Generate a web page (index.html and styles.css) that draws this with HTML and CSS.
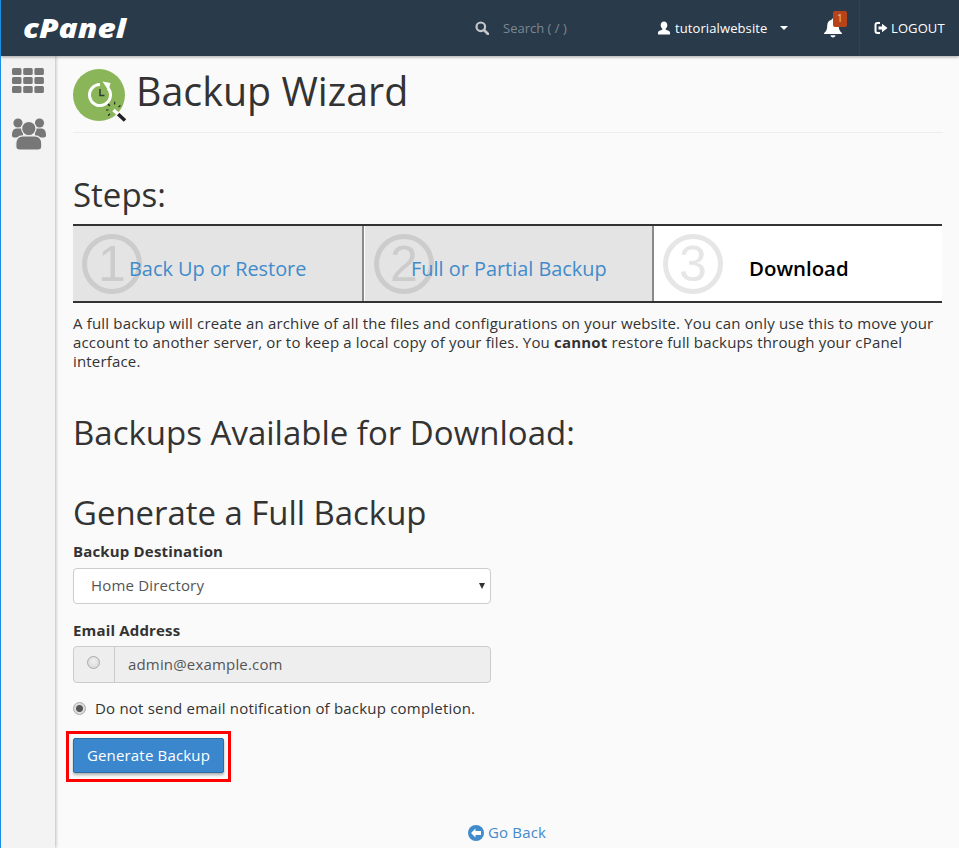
FILE: index.html
```html
<!DOCTYPE html>
<html lang="en">

<head>
  <meta charset="UTF-8">
  <meta name="viewport" content="width=device-width, initial-scale=1.0">
  <title>Backup Wizard</title>
  <link rel="stylesheet" href="styles.css">
</head>

<body>
  <header class="topbar">
    <div class="logo-box"><a class="logo" href="#">cPanel</a></div>
    <div class="search">
      <svg class="search-icon" viewBox="0 0 14 14" width="14" height="14">
        <circle cx="5.800" cy="5.800" r="4.300" fill="none" stroke="#c4c8cc" stroke-width="2.200" />
        <path d="M9 9l4 4" stroke="#c4c8cc" stroke-width="2.600" stroke-linecap="round" />
      </svg>
      <span class="search-text">Search ( / )</span>
    </div>
    <div class="user">
      <svg viewBox="0 0 14 14" width="14" height="14">
        <path d="M7 0.500c2 0 3.300 1.500 3.300 3.600 0 1.600-.7 3-1.600 3.700v1c2 .6 4.300 1.200 4.300 2.700v1.900H1v-1.900c0-1.500 2.300-2.100 4.300-2.700v-1c-.9-.7-1.600-2.100-1.600-3.700C3.700 2 5 .5 7 .5z" fill="#fff" />
      </svg>
      <span>tutorialwebsite</span>
      <i class="caret"></i>
    </div>
    <div class="bell">
      <svg viewBox="0 0 18 18" width="20" height="20">
        <path d="M9 .5c.7 0 1.200.5 1.200 1.100 2.600.5 4 2.700 4 5.400 0 3.500 1 5 2.800 6.500v1H1v-1c1.800-1.500 2.800-3 2.800-6.500 0-2.700 1.400-4.900 4-5.400C7.800 1 8.300.5 9 .5zM6.800 15.500h4.400c0 1.200-1 2-2.200 2s-2.200-.8-2.200-2z" fill="#fff" />
      </svg>
      <span class="badge">1</span>
    </div>
    <div class="logout">
      <svg viewBox="0 0 14 14" width="14" height="14">
        <path d="M6 2H3.500C2.300 2 1.500 2.800 1.500 4v6c0 1.200.8 2 2 2H6" fill="none" stroke="#fff" stroke-width="2" />
        <path d="M4.500 5.500H8V2.800L13.500 7 8 11.200V8.500H4.500z" fill="#fff" />
      </svg>
      <span>LOGOUT</span>
    </div>
  </header>

  <div class="wrap">
    <nav class="sidebar">
      <svg class="side-grid" viewBox="0 0 32 25" width="32" height="25">
        <g fill="#777">
          <rect x="0" y="0" width="9.500" height="7" rx="1.500" />
          <rect x="11.200" y="0" width="9.500" height="7" rx="1.500" />
          <rect x="22.400" y="0" width="9.500" height="7" rx="1.500" />
          <rect x="0" y="9" width="9.500" height="7" rx="1.500" />
          <rect x="11.200" y="9" width="9.500" height="7" rx="1.500" />
          <rect x="22.400" y="9" width="9.500" height="7" rx="1.500" />
          <rect x="0" y="18" width="9.500" height="7" rx="1.500" />
          <rect x="11.200" y="18" width="9.500" height="7" rx="1.500" />
          <rect x="22.400" y="18" width="9.500" height="7" rx="1.500" />
        </g>
      </svg>
      <svg class="side-users" viewBox="0 0 34 32" width="34" height="32">
        <g fill="#777">
          <circle cx="6" cy="5" r="4.600" />
          <circle cx="27.500" cy="5" r="4.600" />
          <path d="M0 17c0-4.500 2-6.500 5-6.500h6v9H2c-1.200 0-2-.8-2-2zM34 17c0-4.500-2-6.500-5-6.500h-6v9h9c1.200 0 2-.8 2-2z" />
          <g stroke="#f3f3f3" stroke-width="1.200">
            <circle cx="16.800" cy="10.500" r="7.200" />
            <path d="M3.800 26c0-5 2.500-8.200 7-8.200h12c4.500 0 7 3.200 7 8.200v2.500c0 2-1.500 3.500-3.500 3.500h-19c-2 0-3.500-1.500-3.500-3.500z" />
          </g>
        </g>
      </svg>
    </nav>

    <main class="content">
      <div class="page-head">
        <svg class="page-icon" viewBox="0 0 54 54" width="54" height="54">
          <circle cx="26" cy="26" r="26" fill="#8ab659" />
          <path d="M27 15.500a10.500 10.500 0 1 0 8 3.700" fill="none" stroke="#fff" stroke-width="3" />
          <path d="M29.500 12.500l8 1.500-2 7.500z" fill="#fff" />
          <path d="M27 20v6.500h4.500" fill="none" stroke="#2d3b3b" stroke-width="1.500" />
          <path d="M45 45l7 6.500" stroke="#222" stroke-width="3.500" />
          <path d="M40.500 41l4.500 4" stroke="#fff" stroke-width="3.500" />
          <path d="M35.500 41h-2.500M37 37l-2-2M41.500 35.500l.3-2.800M45.500 38l2-1.500M37 45l-2 1.500" stroke="#222" stroke-width="1.200" />
        </svg>
        <h1>Backup Wizard</h1>
      </div>

      <h2 class="steps-title">Steps:</h2>
      <div class="steps">
        <div class="step done">
          <span class="num">1</span>
          <a href="#">Back Up or Restore</a>
        </div>
        <div class="step done">
          <span class="num">2</span>
          <a href="#">Full or Partial Backup</a>
        </div>
        <div class="step current">
          <span class="num">3</span>
          <b>Download</b>
        </div>
      </div>

      <p class="desc">A full backup will create an archive of all the files and configurations on your website. You can only use this to move your account to another server, or to keep a local copy of your files. You <b>cannot</b> restore full backups through your cPanel interface.</p>

      <h2 class="avail">Backups Available for Download:</h2>
      <h2 class="generate">Generate a Full Backup</h2>

      <form class="backup-form">
        <label class="field-label">Backup Destination</label>
        <div class="dest-wrap">
          <select class="dest">
            <option>Home Directory</option>
          </select>
        </div>

        <label class="field-label email-label">Email Address</label>
        <div class="email-group">
          <span class="addon"><input class="radio" type="radio" name="notify"></span>
          <input class="email" type="text" value="admin@example.com" disabled>
        </div>

        <label class="no-mail"><input class="radio" type="radio" name="notify" checked> Do not send email notification of backup completion.</label>

        <div class="btn-mark">
          <button class="btn" type="button">Generate Backup</button>
        </div>
      </form>

      <div class="go-back">
        <a href="#">
          <svg viewBox="0 0 16 16" width="16" height="16">
            <circle cx="8" cy="8" r="8" fill="#428bca" />
            <path d="M3 8l4.500-4.500V6H13v4H7.500v2.500z" fill="#fff" />
          </svg>
          Go Back</a>
      </div>
    </main>
  </div>
</body>

</html>
```

FILE: styles.css
```css
* {
  box-sizing: border-box;
}

body {
  margin: 0;
  padding: 0;
  height: 848px;
  overflow: hidden;
  background: #fafafa;
  border-left: 1px solid #1a8fe6;
  font-family: "Open Sans", sans-serif;
  font-size: 15px;
  letter-spacing: 0.17px;
  color: #333;
}

a {
  color: #428bca;
  text-decoration: none;
}

/* top bar */
.topbar {
  display: flex;
  align-items: center;
  height: 56px;
  background: #293a4a;
  color: #fff;
  box-shadow: 0 1px 3px rgba(0, 0, 0, 0.35);
  position: relative;
  z-index: 2;
}

.logo-box {
  width: 474px;
  padding: 0 0 2px 22px;
}

.logo {
  display: inline-block;
  font-size: 27px;
  font-weight: 800;
  font-style: italic;
  letter-spacing: 0;
  color: #fff;
  transform: scaleX(1.17);
  transform-origin: left center;
}

.search {
  display: flex;
  align-items: center;
  width: 183px;
  font-size: 13px;
  letter-spacing: 0;
}

.search-text {
  margin-left: 14px;
  color: #7d8791;
}

.user {
  display: flex;
  align-items: center;
  width: 165px;
  font-size: 13px;
  letter-spacing: 0.1px;
}

.user svg {
  margin-left: -1px;
}

.user span {
  margin-left: 4px;
}

.caret {
  margin-left: 13px;
  border-top: 4px solid #fff;
  border-left: 4.5px solid transparent;
  border-right: 4.5px solid transparent;
}

.bell {
  position: relative;
  width: 36px;
  height: 56px;
  padding-top: 18px;
}

.badge {
  position: absolute;
  left: 10px;
  top: 11px;
  width: 14px;
  height: 16px;
  border-radius: 2px;
  background: #b7431a;
  color: #e8c9b8;
  font-size: 10px;
  line-height: 15px;
  text-align: center;
}

.logout {
  display: flex;
  align-items: center;
  height: 56px;
  padding-left: 14px;
  border-left: 1px solid #314253;
  font-size: 13px;
  letter-spacing: 0.1px;
}

.logout span {
  margin-left: 3px;
}

/* layout */
.wrap {
  display: flex;
  height: 792px;
}

.sidebar {
  display: flex;
  flex-direction: column;
  align-items: center;
  width: 54px;
  padding-top: 12px;
  background: #f3f3f3;
  box-shadow: 1px 0 3px rgba(0, 0, 0, 0.25);
}

.side-users {
  margin-top: 25px;
  margin-left: 1px;
}

.content {
  width: 870px;
  margin-left: 18px;
}

/* title */
.page-head {
  display: flex;
  height: 77px;
  padding-top: 13px;
  border-bottom: 1px solid #eee;
}

.page-icon {
  flex: none;
}

.page-head h1 {
  margin: -7px 0 0 9px;
  font-size: 39.4px;
  font-weight: 400;
  letter-spacing: 0;
  line-height: 58px;
}

h2 {
  margin: 0;
  font-weight: 400;
  letter-spacing: 0;
  color: #333;
}

.steps-title {
  margin-top: 37px;
  font-size: 33px;
  line-height: 50px;
}

/* steps */
.steps {
  display: flex;
  width: 869px;
  height: 79px;
  margin-top: 4px;
  border-top: 2px solid #333;
  border-bottom: 2px solid #333;
  letter-spacing: 0;
}

.step {
  position: relative;
  width: 290px;
  font-size: 19.9px;
  line-height: 27px;
  padding-top: 29px;
}

.step.done {
  background: #e4e4e4;
  border-right: 2px solid #8a8a8a;
  padding-left: 56px;
}

.step:first-child {
  width: 291px;
}

.step.done + .step.done {
  padding-left: 47px;
  box-shadow: inset 1px 0 0 #fff;
}

.step.current {
  width: 288px;
  background: #fff;
  padding-left: 95px;
  color: #000;
}

.step a,
.step b {
  position: relative;
  display: block;
}

.step b {
  font-size: 20.4px;
  font-weight: 600;
}

.num {
  position: absolute;
  left: 9px;
  top: 8px;
  width: 60px;
  height: 60px;
  border: 5px solid #ccc;
  border-radius: 50%;
  font-family: "Liberation Sans", sans-serif;
  font-size: 50px;
  line-height: 50px;
  text-align: center;
  color: #ccc;
}

.step.done + .step.done .num {
  left: 10px;
}

.current .num {
  border-color: #e6e6e6;
  color: #e6e6e6;
}

.desc {
  margin: 11px 0 0;
  line-height: 19px;
}

.desc b {
  font-weight: 700;
}

.avail {
  margin-top: 37px;
  font-size: 33px;
  line-height: 50px;
}

.generate {
  margin-top: 30px;
  font-size: 32.9px;
  line-height: 50px;
}

/* form */
.backup-form {
  width: 418px;
  margin-top: 3px;
}

.field-label {
  display: block;
  font-weight: 700;
  line-height: 20px;
}

.dest-wrap {
  position: relative;
  margin-top: 7px;
}

/* small solid arrow of the select */
.dest-wrap::after {
  content: "";
  position: absolute;
  right: 6px;
  top: 15px;
  border-top: 6px solid #333;
  border-left: 3px solid transparent;
  border-right: 3px solid transparent;
}

.dest {
  appearance: none;
  display: block;
  width: 100%;
  height: 36px;
  padding: 0 12px 2px 17px;
  background: #fff;
  border: 1px solid #ccc;
  border-radius: 4px;
  font-family: inherit;
  font-size: 15px;
  letter-spacing: 0.17px;
  color: #555;
}

.email-label {
  margin-top: 16px;
}

.email-group {
  display: flex;
  height: 37px;
  margin-top: 6px;
  background: #eee;
  border: 1px solid #ccc;
  border-radius: 4px;
}

.addon {
  display: flex;
  justify-content: center;
  width: 41px;
  padding: 9px 2px 0 0;
  border-right: 1px solid #ccc;
}

.radio {
  appearance: none;
  flex: none;
  width: 13px;
  height: 13px;
  margin: 0;
  border: 1px solid #aaa;
  border-radius: 50%;
  background: radial-gradient(circle at 50% 40%, #f0f0f0, #d4d4d4);
}

.radio:checked {
  background: radial-gradient(circle, #555 0, #555 3px, #ddd 4px);
}

.email {
  flex: 1;
  min-width: 0;
  padding: 0 13px 2px;
  background: transparent;
  border: 0;
  font-family: inherit;
  font-size: 15px;
  letter-spacing: 0.17px;
  color: #555;
}

.no-mail {
  display: flex;
  align-items: center;
  gap: 9px;
  margin-top: 15px;
  line-height: 20px;
  letter-spacing: 0.2px;
}

.btn-mark {
  display: inline-block;
  margin: 13px 0 0 -7px;
  padding: 4px 4px 6px;
  border: 3px solid #f00;
}

.btn {
  display: block;
  width: 151px;
  height: 35px;
  padding-bottom: 3px;
  background: #3a87cd;
  border: 1px solid #2e6da4;
  border-radius: 2px;
  box-shadow: 0 2px 3px rgba(0, 0, 0, 0.3);
  font-family: inherit;
  font-size: 15px;
  letter-spacing: 0.17px;
  color: #fff;
}

.go-back {
  margin-top: 40px;
  padding-right: 2px;
  text-align: center;
  line-height: 20px;
}

.go-back svg {
  vertical-align: -3px;
}
```
